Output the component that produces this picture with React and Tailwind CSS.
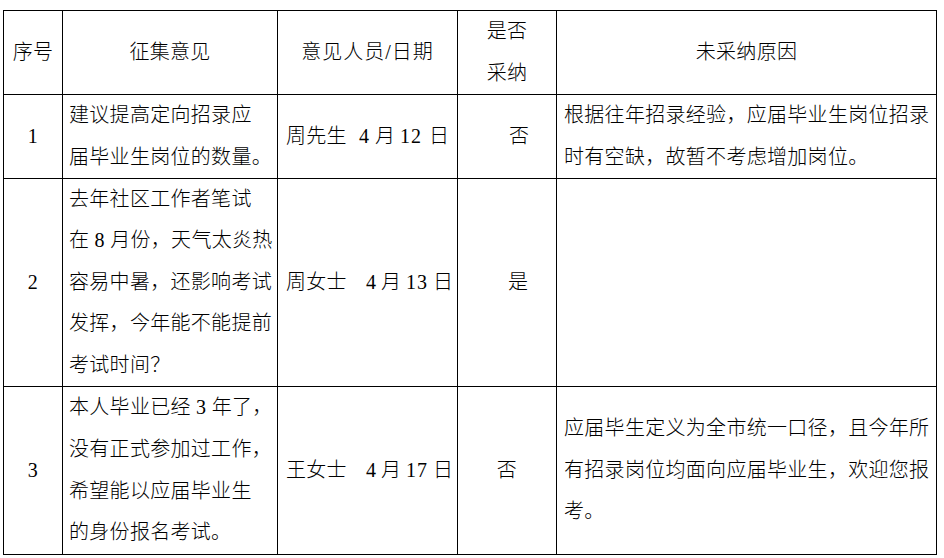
import React from "react";

const font = { fontFamily: '"Liberation Serif", "Noto Sans CJK SC", serif' };

function Cell({ className = "", children }) {
  return (
    <div className={"border-r border-b border-black flex flex-col justify-center " + className}>
      {children}
    </div>
  );
}

function Lines({ lines }) {
  return lines.map((l, i) => (
    <div key={i} className="whitespace-pre">
      {l}
    </div>
  ));
}

export default function App() {
  return (
    <div className="w-[944px] h-[558px] bg-white pt-[10px] pl-[3px] text-black" style={font}>
      <div className="grid grid-cols-[59px_215px_180px_99px_380px] grid-rows-[84px_84px_208px_168px] w-max border-l border-t border-black text-[20px] leading-[41.6px] tracking-[0.3px] font-light">
        {/* header */}
        <Cell className="items-center">序号</Cell>
        <Cell className="items-center">征集意见</Cell>
        <Cell className="items-center">
          <div className="tracking-[1px]">意见人员/日期</div>
        </Cell>
        <Cell className="items-center">
          <div>是否</div>
          <div>采纳</div>
        </Cell>
        <Cell className="items-center">未采纳原因</Cell>

        {/* row 1 */}
        <Cell className="items-center">1</Cell>
        <Cell className="pl-[6px]">
          <Lines lines={["建议提高定向招录应", "届毕业生岗位的数量。"]} />
        </Cell>
        <Cell className="pl-[8px]">
          <div className="flex items-center tracking-normal">
            <span className="tracking-[0.3px]">周先生</span>
            <span className="ml-[12px]">4</span>
            <span className="ml-[6px]">月</span>
            <span className="ml-[5px] tracking-[1px]">12</span>
            <span className="ml-[7px]">日</span>
          </div>
        </Cell>
        <Cell className="pl-[51px]">否</Cell>
        <Cell className="pl-[7px]">
          <Lines lines={["根据往年招录经验，应届毕业生岗位招录", "时有空缺，故暂不考虑增加岗位。"]} />
        </Cell>

        {/* row 2 */}
        <Cell className="items-center">2</Cell>
        <Cell className="pl-[6px]">
          <Lines
            lines={[
              "去年社区工作者笔试",
              "在 8 月份，天气太炎热",
              "容易中暑，还影响考试",
              "发挥，今年能不能提前",
              "考试时间？",
            ]}
          />
        </Cell>
        <Cell className="pl-[8px]">
          <div className="flex items-center tracking-normal">
            <span className="tracking-[0.3px]">周女士</span>
            <span className="ml-[19px]">4</span>
            <span className="ml-[5px]">月</span>
            <span className="ml-[5px] tracking-[1px]">13</span>
            <span className="ml-[5px]">日</span>
          </div>
        </Cell>
        <Cell className="pl-[50px]">是</Cell>
        <Cell className="pl-[7px]"></Cell>

        {/* row 3 */}
        <Cell className="items-center">3</Cell>
        <Cell className="pl-[6px]">
          <Lines
            lines={[
              "本人毕业已经 3 年了，",
              "没有正式参加过工作，",
              "希望能以应届毕业生",
              "的身份报名考试。",
            ]}
          />
        </Cell>
        <Cell className="pl-[8px]">
          <div className="flex items-center tracking-normal">
            <span className="tracking-[0.3px]">王女士</span>
            <span className="ml-[19px]">4</span>
            <span className="ml-[5px]">月</span>
            <span className="ml-[5px] tracking-[1px]">17</span>
            <span className="ml-[5px]">日</span>
          </div>
        </Cell>
        <Cell className="items-center">否</Cell>
        <Cell className="pl-[7px]">
          <Lines
            lines={[
              "应届毕生定义为全市统一口径，且今年所",
              "有招录岗位均面向应届毕业生，欢迎您报",
              "考。",
            ]}
          />
        </Cell>
      </div>
    </div>
  );
}
